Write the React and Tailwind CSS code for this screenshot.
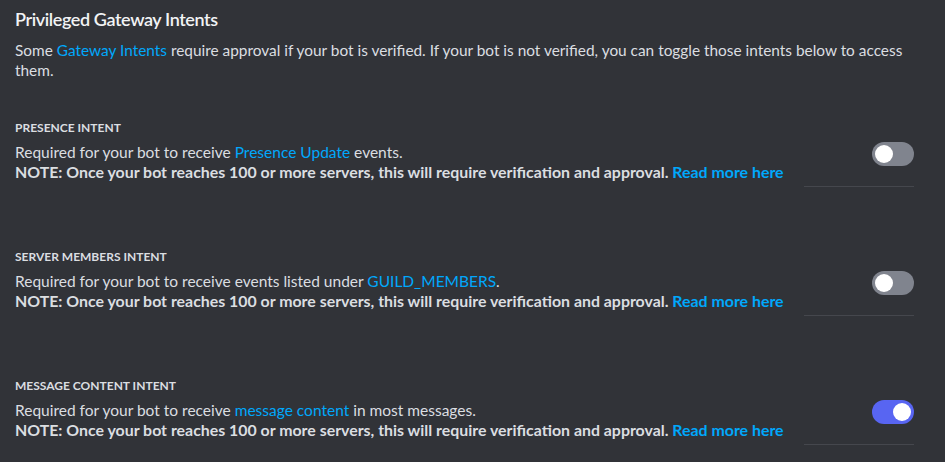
import React from 'react';

const intents = [
  {
    title: 'PRESENCE INTENT',
    before: 'Required for your bot to receive ',
    link: 'Presence Update',
    after: ' events.',
    on: false,
  },
  {
    title: 'SERVER MEMBERS INTENT',
    before: 'Required for your bot to receive events listed under ',
    link: 'GUILD_MEMBERS',
    after: '.',
    on: false,
  },
  {
    title: 'MESSAGE CONTENT INTENT',
    before: 'Required for your bot to receive ',
    link: 'message content',
    after: ' in most messages.',
    on: true,
  },
];

function Toggle({ on }) {
  return (
    <div
      className={`w-[42px] h-[24px] rounded-full p-[3px] flex items-center ${
        on ? 'bg-[#5865f2] justify-end' : 'bg-[#80848e] justify-start'
      }`}
    >
      <div className="w-[18px] h-[18px] rounded-full bg-white" />
    </div>
  );
}

export default function App() {
  return (
    <div
      className="w-[945px] h-[462px] overflow-hidden bg-[#313338] text-[#dbdee1] pl-[15px] pr-[31px] pt-[6px]"
      style={{ fontFamily: 'Lato, sans-serif' }}
    >
      <h2 className="text-[18px] leading-[26px] font-semibold tracking-[-0.4px] text-[#f2f3f5]">
        Privileged Gateway Intents
      </h2>
      <p className="mt-[8px] text-[15.4px] leading-[20px]">
        Some <span className="text-[#00a8fc]">Gateway Intents</span> require approval if your bot is verified. If your bot
        is not verified, you can toggle those intents below to access them.
      </p>

      <div className="mt-[40px] flex flex-col gap-[62px]">
        {intents.map((it) => (
          <div key={it.title}>
            <div className="text-[12px] leading-[16px] font-bold mb-[6px]">{it.title}</div>
            <div className="flex items-stretch">
              <div className="flex-1 text-[15.5px] leading-[20px] pb-[5px]">
                <div>
                  {it.before}
                  <span className="text-[#00a8fc]">{it.link}</span>
                  {it.after}
                </div>
                <div className="font-bold text-[15.9px]">
                  NOTE: Once your bot reaches 100 or more servers, this will require verification and approval.{' '}
                  <span className="text-[#00a8fc]">Read more here</span>
                </div>
              </div>
              <div className="w-[110px] border-b border-[#45474d] flex justify-end items-start">
                <Toggle on={it.on} />
              </div>
            </div>
          </div>
        ))}
      </div>
    </div>
  );
}
